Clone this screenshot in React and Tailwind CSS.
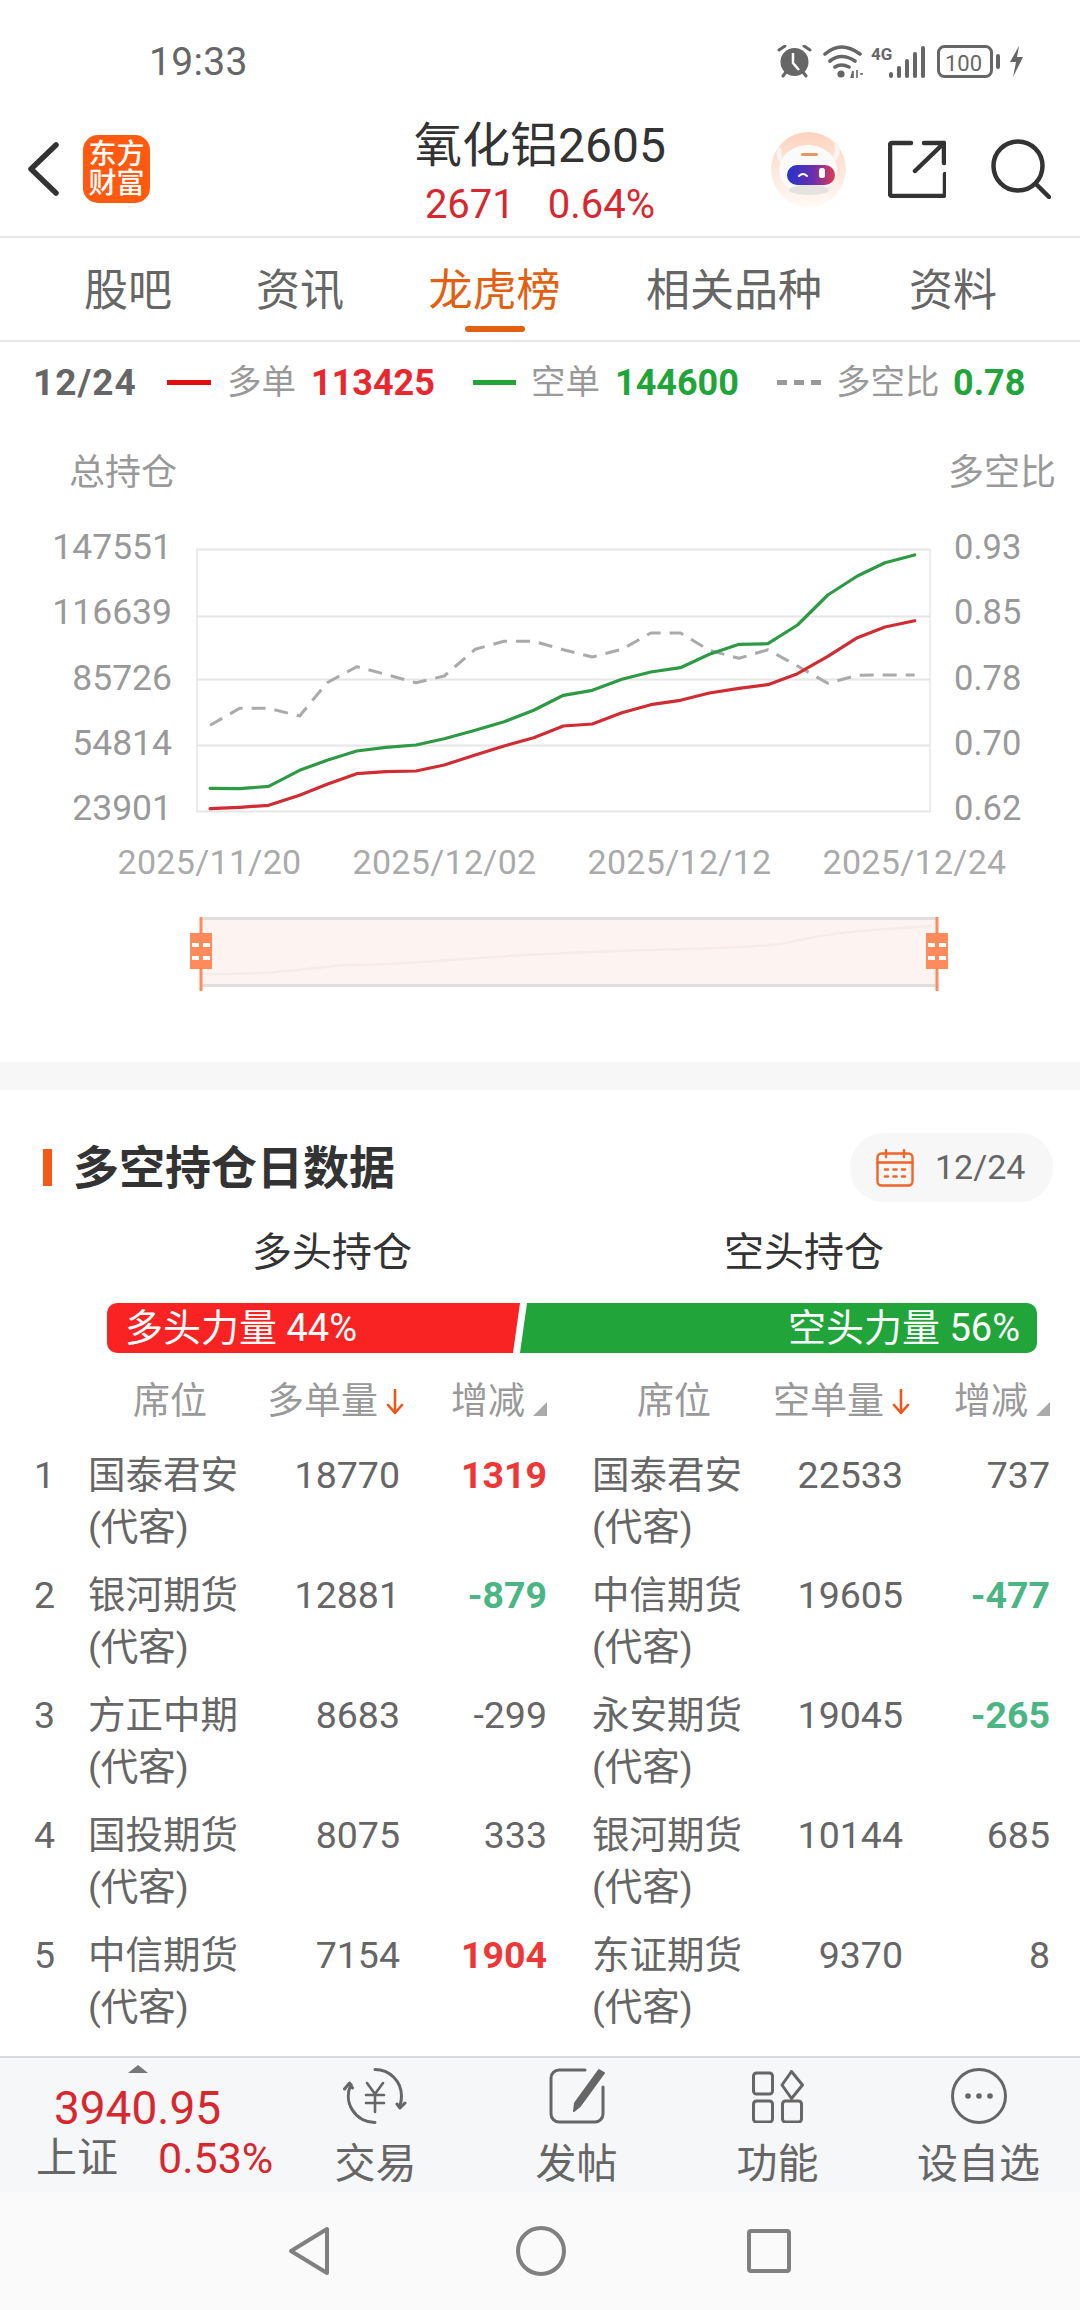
import React from "react";

const gz = [[305,1102],[348,1103],[390,1096],[435,1048],[475,1018],[518,990],[560,979],[604,972],[645,953],[690,928],[732,902],[775,868],[818,823],[860,808],[903,775],[945,753],[988,740],[1030,700],[1073,670],[1115,668],[1158,612],[1202,522],[1245,465],[1285,425],[1328,402]];
const rz = [[305,1163],[348,1159],[390,1153],[435,1123],[475,1090],[518,1058],[560,1052],[604,1050],[645,1032],[690,1002],[732,975],[775,950],[818,915],[860,909],[903,875],[945,851],[988,838],[1030,816],[1073,802],[1115,791],[1158,758],[1202,706],[1245,650],[1285,618],[1328,599]];
const dz = [[305,913],[348,862],[390,862],[435,885],[475,785],[518,737],[560,760],[604,785],[645,765],[690,685],[732,661],[775,661],[818,686],[860,708],[903,685],[945,636],[988,636],[1030,688],[1073,712],[1115,686],[1158,735],[1202,787],[1245,763],[1285,762],[1328,762]];
const pts = (a) => a.map(([x, y]) => `${(x / 1.452).toFixed(1)},${(420 + y / 3).toFixed(1)}`).join(" ");

const RED = "text-[#ee3838]";
const GREEN = "text-[#4cb585]";
const rows = [
  ["1", "国泰君安", "18770", ["1319", RED], "国泰君安", "22533", ["737", ""]],
  ["2", "银河期货", "12881", ["-879", GREEN], "中信期货", "19605", ["-477", GREEN]],
  ["3", "方正中期", "8683", ["-299", ""], "永安期货", "19045", ["-265", GREEN]],
  ["4", "国投期货", "8075", ["333", ""], "银河期货", "10144", ["685", ""]],
  ["5", "中信期货", "7154", ["1904", RED], "东证期货", "9370", ["8", ""]],
];

function StatusIcons() {
  return (
    <svg width="247" height="33" viewBox="777 45 247 33" fill="none" className="block">
      <g stroke="#666" strokeWidth="3" strokeLinecap="round">
        <path d="M779 50l6-4M810 50l-6-4M783 76l3-4M806 76l-3-4" />
      </g>
      <circle cx="794.5" cy="62" r="14" fill="#666" />
      <path d="M793 53v10l6 7" stroke="#fff" strokeWidth="2.5" fill="none" />
      <g stroke="#666" strokeWidth="3.6" fill="none" strokeLinecap="round">
        <path d="M825 54q16-14 35 0M830 61q11-9 25 0M835 67q6-4 14 0" />
      </g>
      <circle cx="841" cy="74" r="3.6" fill="#666" />
      <path d="M853 71l-2 7h2zM857 70v8M860 74h3" stroke="#666" strokeWidth="1.6" />
      <text x="871" y="60" fontSize="17" fontWeight="700" fill="#666" fontFamily="Roboto">4G</text>
      <g fill="#666">
        <rect x="889" y="72" width="4" height="6" rx="2" />
        <rect x="897" y="66" width="4" height="12" rx="2" />
        <rect x="905" y="59" width="4" height="19" rx="2" />
        <rect x="913" y="52" width="4" height="26" rx="2" />
        <rect x="921" y="46" width="4" height="32" rx="2" />
      </g>
      <rect x="938.5" y="46.5" width="53" height="30" rx="6" stroke="#666" strokeWidth="3" />
      <text x="945" y="71" fontSize="22" fill="#666" fontFamily="Roboto">100</text>
      <rect x="996" y="54" width="4" height="15" rx="2" fill="#666" />
      <path d="M1019 46l-9 16h6l-3 15 10-20h-6z" fill="#666" />
    </svg>
  );
}

function Robot() {
  return (
    <svg width="75" height="75" viewBox="0 0 75 75" className="block">
      <defs>
        <linearGradient id="bg" x1="0" y1="0" x2="0" y2="1">
          <stop offset="0" stopColor="#fdd3bf" />
          <stop offset="1" stopColor="#fffaf7" />
        </linearGradient>
        <linearGradient id="vis" x1="0" y1="0" x2="1" y2="0">
          <stop offset="0" stopColor="#2434c8" />
          <stop offset="0.55" stopColor="#6a2fb0" />
          <stop offset="1" stopColor="#e23a52" />
        </linearGradient>
      </defs>
      <circle cx="37.5" cy="37.5" r="37.5" fill="url(#bg)" />
      <path d="M8 18q-1 9 6 13M66 14q2 9-5 15" stroke="#f6f3f1" strokeWidth="5" strokeLinecap="round" fill="none" />
      <ellipse cx="37" cy="38" rx="29" ry="25" fill="#fbfafa" />
      <ellipse cx="38" cy="58" rx="20" ry="5" fill="#dcd8d6" opacity="0.7" />
      <rect x="30" y="21" width="17" height="3" rx="1.5" fill="#e09a60" />
      <rect x="16" y="33" width="48" height="20" rx="10" fill="url(#vis)" />
      <path d="M28 44q4-4 8 0" stroke="#fff" strokeWidth="2" fill="none" strokeLinecap="round" />
      <rect x="48" y="36" width="6" height="10" rx="2.5" fill="#fff" />
    </svg>
  );
}

function TradeIcon() {
  return (
    <svg width="66" height="56" viewBox="0 0 66 56" fill="none" stroke="#666" strokeWidth="3" strokeLinecap="round" strokeLinejoin="round">
      <path d="M32 1.5a26.5 26.5 0 0 1 26.5 26.500q0 6-2 11" />
      <path d="M32 54.500a26.500 26.500 0 0 1-24-38" />
      <path d="M1.500 21l5-6 3 5M62 35l-5 5-3-4" />
      <path d="M24 15l8 11 8-11M32 26v18M23 27h18M23 35h18" strokeWidth="2.6" />
    </svg>
  );
}
function PostIcon() {
  return (
    <svg width="56" height="56" viewBox="0 0 56 56" fill="none" stroke="#666" strokeWidth="3" strokeLinecap="round" strokeLinejoin="round">
      <path d="M36 2H10a8 8 0 0 0-8 8v36a8 8 0 0 0 8 8h36a8 8 0 0 0 8-8V19" />
      <path d="M50 2l5 3-24 33-6 5 1-8z" fill="#666" stroke="#666" strokeWidth="2" />
    </svg>
  );
}
function AppsIcon() {
  return (
    <svg width="52" height="53" viewBox="0 0 52 53" fill="none" stroke="#666" strokeWidth="3" strokeLinejoin="round">
      <rect x="1.500" y="3" width="19" height="21" rx="3" />
      <rect x="1.500" y="31" width="19" height="21" rx="3" />
      <rect x="30.500" y="31" width="19" height="21" rx="3" />
      <path d="M39.500 1.500l11 13.500-11 13.500-9.500-13.500z" />
    </svg>
  );
}
function MoreIcon() {
  return (
    <svg width="56" height="56" viewBox="0 0 56 56" fill="none">
      <circle cx="28" cy="28" r="26.500" stroke="#666" strokeWidth="3" />
      <circle cx="17" cy="28" r="2.800" fill="#666" />
      <circle cx="28" cy="28" r="2.800" fill="#666" />
      <circle cx="39" cy="28" r="2.800" fill="#666" />
    </svg>
  );
}

function SliderHandle({ side }) {
  return (
    <svg width="22" height="74" viewBox="0 0 22 74" className={`absolute top-[-3px] ${side}`}>
      <rect x="9.500" width="3" height="74" fill="#ff8a5c" />
      <rect y="16" width="22" height="36" fill="#ff8a5c" />
      <g fill="#fff">
        <rect x="2" y="26" width="7" height="4" />
        <rect x="13" y="26" width="7" height="4" />
        <rect x="2" y="39" width="7" height="4" />
        <rect x="13" y="39" width="7" height="4" />
      </g>
    </svg>
  );
}

function Sort() {
  return (
    <svg width="18" height="26" viewBox="0 0 18 26" fill="none" stroke="#f0561a" strokeWidth="2.600" strokeLinecap="round" strokeLinejoin="round" className="ml-[8px]">
      <path d="M9 1v23M2 16l7 8 7-8" />
    </svg>
  );
}
function Corner() {
  return (
    <svg width="14" height="14" viewBox="0 0 14 14" className="ml-[8px] mt-[25px]">
      <path d="M14 0v14H0z" fill="#aaa" />
    </svg>
  );
}

const GRID = "grid grid-cols-[54px_170px_142px_192px_170px_141px_147px] pl-[34px]";

export default function App() {
  return (
    <div className="relative flex h-[2310px] w-[1080px] flex-col overflow-hidden bg-white font-[Roboto,'Noto_Sans_CJK_SC',sans-serif] text-[#666]">
      {/* status */}
      <div className="mt-[45px] mb-[32px] flex h-[33px] items-center pl-[149px]">
        <span className="w-[97px] text-[39px] leading-[36px] tracking-[0.3px] text-[#666]">19:33</span>
        <div className="ml-[531px]"><StatusIcons /></div>
      </div>

      {/* header */}
      <div className="flex h-[126px] items-center pb-[8px]">
        <svg width="32" height="54" viewBox="0 0 32 54" fill="none" stroke="#333" strokeWidth="5.500" strokeLinecap="round" strokeLinejoin="round" className="ml-[27px]">
          <path d="M29 3L4 27l25 24" />
        </svg>
        <div className="ml-[24px] flex h-[68px] w-[67px] flex-col items-center justify-center rounded-[15px] bg-[#ff5a10] text-[28px] font-medium leading-[29px] text-white">
          <span>东方</span>
          <span>财富</span>
        </div>
        <div className="ml-[190px] mt-[7px] flex w-[400px] flex-col items-center">
          <div className="text-[48px] leading-[56px] text-[#333]">氧化铝2605</div>
          <div className="mt-[9px] flex text-[40px] leading-[44px] text-[#d8282f]">
            <span>2671</span>
            <span className="ml-[33px]">0.64%</span>
          </div>
        </div>
        <div className="ml-[31px]"><Robot /></div>
        <svg width="58" height="58" viewBox="0 0 58 58" fill="none" stroke="#333" strokeWidth="4.500" strokeLinecap="round" strokeLinejoin="round" className="ml-[42px]">
          <path d="M23 3H4a2 2 0 0 0-2 2v49a2 2 0 0 0 2 2h51a2 2 0 0 0 2-2V34" />
          <path d="M27 31L56 3M36 3h20v20" />
        </svg>
        <svg width="60" height="60" viewBox="0 0 60 60" fill="none" stroke="#333" strokeWidth="4.500" strokeLinecap="round" className="ml-[45px]">
          <circle cx="27" cy="27" r="24.500" />
          <path d="M45 45l13 13" />
        </svg>
      </div>

      {/* tabs */}
      <div className="flex h-[106px] items-start gap-[86px] border-y-2 border-[#e6e6e6] pl-[84px] text-[44px] leading-[60px] text-[#666]">
        <span className="mt-[23px] w-[86px] whitespace-nowrap">股吧</span>
        <span className="mt-[23px] w-[87px] whitespace-nowrap">资讯</span>
        <div className="mt-[23px] flex w-[131px] flex-col items-center whitespace-nowrap text-[#e2600f]">
          <span>龙虎榜</span>
          <div className="mt-[5px] h-[6px] w-[60px] rounded-full bg-[#e2600f]" />
        </div>
        <span className="mt-[23px] w-[177px] whitespace-nowrap">相关品种</span>
        <span className="mt-[23px] whitespace-nowrap">资料</span>
      </div>

      {/* legend */}
      <div className="flex h-[81px] items-center text-[34.500px] text-[#999]">
        <span className="ml-[33px] w-[105px] whitespace-nowrap text-[37px] font-bold tracking-[1px] text-[#666]">12/24</span>
        <div className="ml-[29px] h-[5px] w-[44px] bg-[#e01010]" />
        <span className="ml-[16px] w-[67px] whitespace-nowrap">多单</span>
        <span className="ml-[17px] w-[123px] text-[36px] font-bold text-[#e8282e]">113425</span>
        <div className="ml-[39px] h-[5px] w-[43px] bg-[#21a53a]" />
        <span className="ml-[15px] w-[66px] whitespace-nowrap">空单</span>
        <span className="ml-[18px] w-[123px] text-[36px] font-bold text-[#21a53a]">144600</span>
        <div className="ml-[39px] h-0 w-[44px] border-t-[5px] border-dashed border-[#999]" />
        <span className="ml-[15px] w-[100px] whitespace-nowrap">多空比</span>
        <span className="ml-[17px] text-[36px] font-bold text-[#21a53a]">0.78</span>
      </div>

      {/* chart */}
      <div className="mt-[28px] flex h-[44px] items-center justify-between pl-[69px] pr-[24px] text-[36px] leading-[44px] text-[#999]">
        <span>总持仓</span>
        <span>多空比</span>
      </div>
      <div className="mt-[30px] flex h-[305px]">
        <div className="flex w-[172px] flex-col items-end justify-between text-[35.500px] leading-[44px] text-[#999]">
          <span>147551</span>
          <span>116639</span>
          <span>85726</span>
          <span>54814</span>
          <span>23901</span>
        </div>
        <svg width="750" height="305" viewBox="190 524 750 305" className="ml-[18px] block" fill="none">
          <g stroke="#e6e6e6" strokeWidth="2">
            <path d="M196 548.500H930M196 615.500H930M196 678.500H930M196 744.500H930M196 810.500H930" />
            <path d="M197 548V811M930 548V811" strokeWidth="1.500" />
          </g>
          <polyline points={pts(dz)} stroke="#aaa" strokeWidth="3" strokeDasharray="14 9" strokeLinejoin="round" />
          <polyline points={pts(gz)} stroke="#2e9a45" strokeWidth="3.200" strokeLinejoin="round" strokeLinecap="round" />
          <polyline points={pts(rz)} stroke="#cf2d33" strokeWidth="3.200" strokeLinejoin="round" strokeLinecap="round" />
        </svg>
        <div className="ml-[14px] flex flex-col justify-between text-[34.500px] leading-[44px] text-[#999]">
          <span>0.93</span>
          <span>0.85</span>
          <span>0.78</span>
          <span>0.70</span>
          <span>0.62</span>
        </div>
      </div>
      <div className="ml-[92px] mt-[10px] grid w-[940px] grid-cols-4 text-center text-[34px] leading-[44px] tracking-[0.3px] text-[#aaa]">
        <span>2025/11/20</span>
        <span>2025/12/02</span>
        <span>2025/12/12</span>
        <span>2025/12/24</span>
      </div>

      {/* slider */}
      <div className="relative ml-[202px] mt-[33px] h-[70px] w-[734px] border-y-[3px] border-[#dedede] bg-[#fdf4f2]">
        <svg width="734" height="64" viewBox="0 0 734 64" fill="none" className="block">
          <path d="M4 54q50 0 70-2l70-7q40 0 90-4t110-7 140-5 100-6q40-10 100-14l46-3" stroke="#f8ebe7" strokeWidth="2.500" />
        </svg>
        <SliderHandle side="left-[-12px]" />
        <SliderHandle side="right-[-12px]" />
      </div>

      <div className="mt-[75px] h-[28px] bg-[#f7f7f7]" />

      {/* section title */}
      <div className="mt-[43px] flex h-[69px] items-center">
        <div className="ml-[43px] h-[37px] w-[9px] bg-[#f4591a]" />
        <div className="ml-[21px] text-[46px] font-bold leading-[60px] text-[#333]">多空持仓日数据</div>
        <div className="ml-auto mr-[27px] flex h-[69px] w-[203px] items-center rounded-[34px] bg-[#f7f7f7]">
          <svg width="38" height="38" viewBox="0 0 38 38" fill="none" stroke="#f0652a" strokeWidth="2.400" strokeLinecap="round" className="ml-[26px]">
            <rect x="1.500" y="4.500" width="35" height="32" rx="4" />
            <path d="M1.500 13.500h35M10 1v7M28 1v7" />
            <path d="M9 20.500h3M17.500 20.500h3M26 20.500h3M9 27.500h3M17.500 27.500h3M26 27.500h3" strokeWidth="2.600" />
          </svg>
          <span className="ml-[21px] text-[34px] text-[#666]">12/24</span>
        </div>
      </div>

      <div className="mt-[23px] flex h-[56px] text-[40px] leading-[56px] text-[#333]">
        <span className="ml-[252px]">多头持仓</span>
        <span className="ml-[312px]">空头持仓</span>
      </div>

      {/* power bar */}
      <div className="ml-[107px] mt-[22px] flex h-[50px] w-[930px] text-[38px] leading-[50px] text-white">
        <div className="w-[413px] rounded-l-[10px] bg-[#f92323] pl-[18px] [clip-path:polygon(0_0,100%_0,calc(100%-7px)_100%,0_100%)]">多头力量 44%</div>
        <div className="flex-1 rounded-r-[10px] bg-[#21a53a] pr-[17px] text-right [clip-path:polygon(7px_0,100%_0,100%_100%,0_100%)]">空头力量 56%</div>
      </div>

      {/* table head */}
      <div className={`${GRID} mt-[24px] h-[50px] text-[37px] leading-[50px] text-[#999]`}>
        <span />
        <span className="pl-[45px]">席位</span>
        <div className="-mr-[4px] flex items-center justify-end whitespace-nowrap">多单量<Sort /></div>
        <div className="flex justify-end whitespace-nowrap pr-[45px]">增减<Corner /></div>
        <span className="pl-[45px]">席位</span>
        <div className="-mr-[7px] flex items-center justify-end whitespace-nowrap">空单量<Sort /></div>
        <div className="flex justify-end whitespace-nowrap">增减<Corner /></div>
      </div>

      {/* rows */}
      <div className="mt-[22px] flex flex-col">
        {rows.map((r) => (
          <div key={r[0]} className={`${GRID} h-[120px] text-[37.500px] leading-[52px] text-[#666]`}>
            <span>{r[0]}</span>
            <div className="flex flex-col">
              <span>{r[1]}</span>
              <span>(代客)</span>
            </div>
            <span className="text-right">{r[2]}</span>
            <span className={`pr-[45px] text-right ${r[3][1] ? "font-bold " + r[3][1] : ""}`}>{r[3][0]}</span>
            <div className="flex flex-col">
              <span>{r[4]}</span>
              <span>(代客)</span>
            </div>
            <span className="text-right">{r[5]}</span>
            <span className={`text-right ${r[6][1] ? "font-bold " + r[6][1] : ""}`}>{r[6][0]}</span>
          </div>
        ))}
      </div>

      {/* footer */}
      <div className="mt-auto flex h-[136px] border-t-2 border-[#d6d9de] bg-[#f6f7f9]">
        <div className="flex w-[275px] flex-col items-center">
          <svg width="20" height="8" viewBox="0 0 20 8" className="ml-[1px] mt-[7px]"><path d="M10 0l10 8H0z" fill="#777" /></svg>
          <div className="mt-[10px] text-[46px] leading-[50px] text-[#d8282f]">3940.95</div>
          <div className="ml-[36px] mt-[2px] flex items-center self-start whitespace-nowrap leading-[46px]">
            <span className="text-[41px] text-[#666]">上证</span>
            <span className="ml-[40px] text-[43px] text-[#d8282f]">0.53%</span>
          </div>
        </div>
        {[["交易", <TradeIcon key="t" />], ["发帖", <PostIcon key="p" />], ["功能", <AppsIcon key="a" />], ["设自选", <MoreIcon key="m" />]].map(([t, ic]) => (
          <div key={t} className="flex w-[201px] flex-col items-center">
            <div className="mt-[10px] flex h-[56px] items-center">{ic}</div>
            <div className="mt-[15px] whitespace-nowrap text-[41px] leading-[50px] text-[#666]">{t}</div>
          </div>
        ))}
      </div>

      {/* nav */}
      <div className="flex h-[118px] items-center bg-[#fafafa] pl-[288px]">
        <svg width="42" height="50" viewBox="0 0 42 50" fill="none" stroke="#808080" strokeWidth="4" strokeLinejoin="round">
          <path d="M39 3v44L3 25z" />
        </svg>
        <svg width="50" height="50" viewBox="0 0 50 50" fill="none" stroke="#808080" strokeWidth="4" className="ml-[186px]">
          <circle cx="25" cy="25" r="23" />
        </svg>
        <svg width="44" height="44" viewBox="0 0 44 44" fill="none" stroke="#808080" strokeWidth="4" className="ml-[181px]">
          <rect x="2" y="2" width="40" height="40" rx="2" />
        </svg>
      </div>
    </div>
  );
}
